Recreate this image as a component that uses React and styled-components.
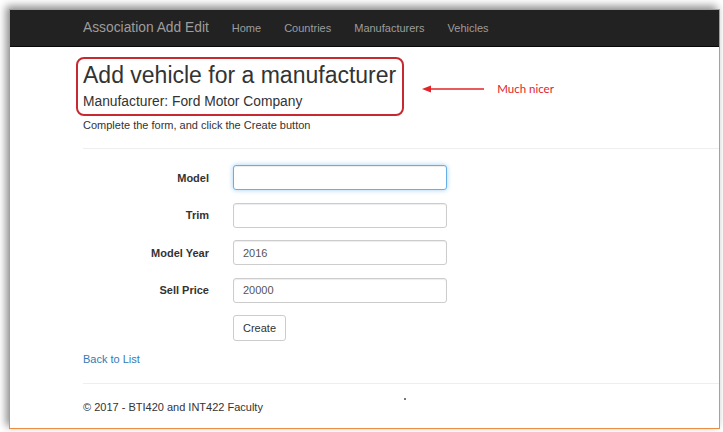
import React from "react"
import styled, { createGlobalStyle } from "styled-components"

const GlobalStyle = createGlobalStyle`
  html, body {
    margin: 0;
    padding: 0;
    background: #fff;
  }
  body {
    font-family: "Liberation Sans", Arial, sans-serif;
    color: #333;
  }
`

const navLinks = ["Home", "Countries", "Manufacturers", "Vehicles"]

const fields = [
  { label: "Model", value: "", focused: true },
  { label: "Trim", value: "" },
  { label: "Model Year", value: "2016" },
  { label: "Sell Price", value: "20000" },
]

const App = () => (
  <Page>
    <GlobalStyle />
    <Window>
      <Navbar>
        <Brand>Association Add Edit</Brand>
        <NavList>
          {navLinks.map((l) => (
            <NavLink key={l}>{l}</NavLink>
          ))}
        </NavList>
      </Navbar>
      <Container>
        <HeaderRow>
          <TitleBox>
            <Title>Add vehicle for a manufacturer</Title>
            <Subtitle>Manufacturer: Ford Motor Company</Subtitle>
          </TitleBox>
          <Annotation>
            <svg width="62" height="8" viewBox="0 0 62 8">
              <line x1="6" y1="4" x2="62" y2="4" stroke="#e2232a" strokeWidth="1.6" />
              <polygon points="0,4 9,0.5 9,7.5" fill="#e2232a" />
            </svg>
            <AnnotationText>Much nicer</AnnotationText>
          </Annotation>
        </HeaderRow>
        <Lead>Complete the form, and click the Create button</Lead>
        <Rule $top={15} />
        <Form>
          {fields.map((f) => (
            <React.Fragment key={f.label}>
              <Label>{f.label}</Label>
              <Input $focused={f.focused} defaultValue={f.value} />
            </React.Fragment>
          ))}
          <span />
          <ButtonCell>
            <Button type="button">Create</Button>
          </ButtonCell>
        </Form>
        <BackLink href="#">Back to List</BackLink>
        <Rule />
        <Footer>© 2017 - BTI420 and INT422 Faculty</Footer>
        <Speck />
      </Container>
    </Window>
  </Page>
)

export default App

const Page = styled.div`
  width: 723px;
  height: 432px;
  overflow: hidden;
  padding: 9px 0 0 9px;
  box-sizing: border-box;
`

const Window = styled.div`
  position: relative;
  width: 711px;
  height: 420px;
  box-sizing: border-box;
  border: 1px solid #e98f45;
  background: #fff;
  overflow: hidden;
  box-shadow: -3px -3px 8px rgba(0, 0, 0, 0.45);
  display: flex;
  flex-direction: column;
`

const Navbar = styled.div`
  height: 36px;
  background: #222;
  border-bottom: 1px solid #080808;
  display: flex;
  align-items: center;
  padding-left: 73px;
  flex-shrink: 0;
`

const Brand = styled.span`
  font-size: 13.8px;
  color: #9d9d9d;
  margin-right: 12px;
  margin-top: -2px;
`

const NavList = styled.div`
  display: flex;
  gap: 23px;
  margin-left: 11px;
  margin-top: -1px;
`

const NavLink = styled.span`
  font-size: 11px;
  color: #9d9d9d;
`

const Container = styled.div`
  position: relative;
  flex: 1;
  padding-left: 73px;
  display: flex;
  flex-direction: column;
`

const HeaderRow = styled.div`
  display: flex;
  align-items: center;
  margin-top: 10px;
`

const TitleBox = styled.div`
  margin-left: -7px;
  border: 2px solid #c62a30;
  border-radius: 8px;
  padding: 3px 6px 4px 5px;
`

const Title = styled.h2`
  margin: 0;
  font-size: 23px;
  line-height: 26px;
  font-weight: 500;
  color: #333;
`

const Subtitle = styled.h4`
  margin: 6px 0 0;
  font-size: 13.8px;
  line-height: 16px;
  font-weight: 500;
  color: #333;
`

const Annotation = styled.div`
  display: flex;
  align-items: center;
  margin-left: 18px;
  margin-top: 4px;
`

const AnnotationText = styled.span`
  margin-left: 13px;
  font-family: Lato, "Liberation Sans", sans-serif;
  font-size: 11.5px;
  color: #e2232a;
`

const Lead = styled.p`
  margin: 2px 0 0;
  font-size: 11px;
  line-height: 15px;
`

const Rule = styled.hr`
  margin: ${(p) => p.$top ?? 16}px 0 0;
  border: 0;
  border-top: 1px solid #eee;
  width: 100%;
`

const Form = styled.div`
  display: grid;
  grid-template-columns: 126px 214px;
  column-gap: 24px;
  row-gap: 12.5px;
  margin-top: 16px;
  align-items: center;
`

const Label = styled.label`
  text-align: right;
  font-size: 11px;
  font-weight: bold;
  color: #333;
`

const Input = styled.input`
  height: 25px;
  box-sizing: border-box;
  border: 1px solid ${(p) => (p.$focused ? "#66afe9" : "#ccc")};
  border-radius: 3px;
  padding: 0 9px;
  font-family: "Liberation Sans", Arial, sans-serif;
  font-size: 11px;
  color: #555;
  outline: none;
  box-shadow: ${(p) =>
    p.$focused
      ? "inset 0 1px 1px rgba(0,0,0,.075), 0 0 5px rgba(102,175,233,.6)"
      : "inset 0 1px 1px rgba(0,0,0,.075)"};
`

const ButtonCell = styled.div`
  display: flex;
`

const Button = styled.button`
  height: 26px;
  padding: 0 9px;
  background: #fff;
  border: 1px solid #ccc;
  border-radius: 3px;
  font-family: "Liberation Sans", Arial, sans-serif;
  font-size: 11px;
  color: #333;
`

const BackLink = styled.a`
  align-self: flex-start;
  margin-top: 11px;
  font-size: 11px;
  line-height: 15px;
  color: #337ab7;
  text-decoration: none;
`

const Footer = styled.p`
  margin: 16px 0 0;
  font-size: 11px;
  line-height: 15px;
`

const Speck = styled.span`
  position: absolute;
  left: 394px;
  bottom: 28px;
  width: 2px;
  height: 2px;
  background: #777;
`
